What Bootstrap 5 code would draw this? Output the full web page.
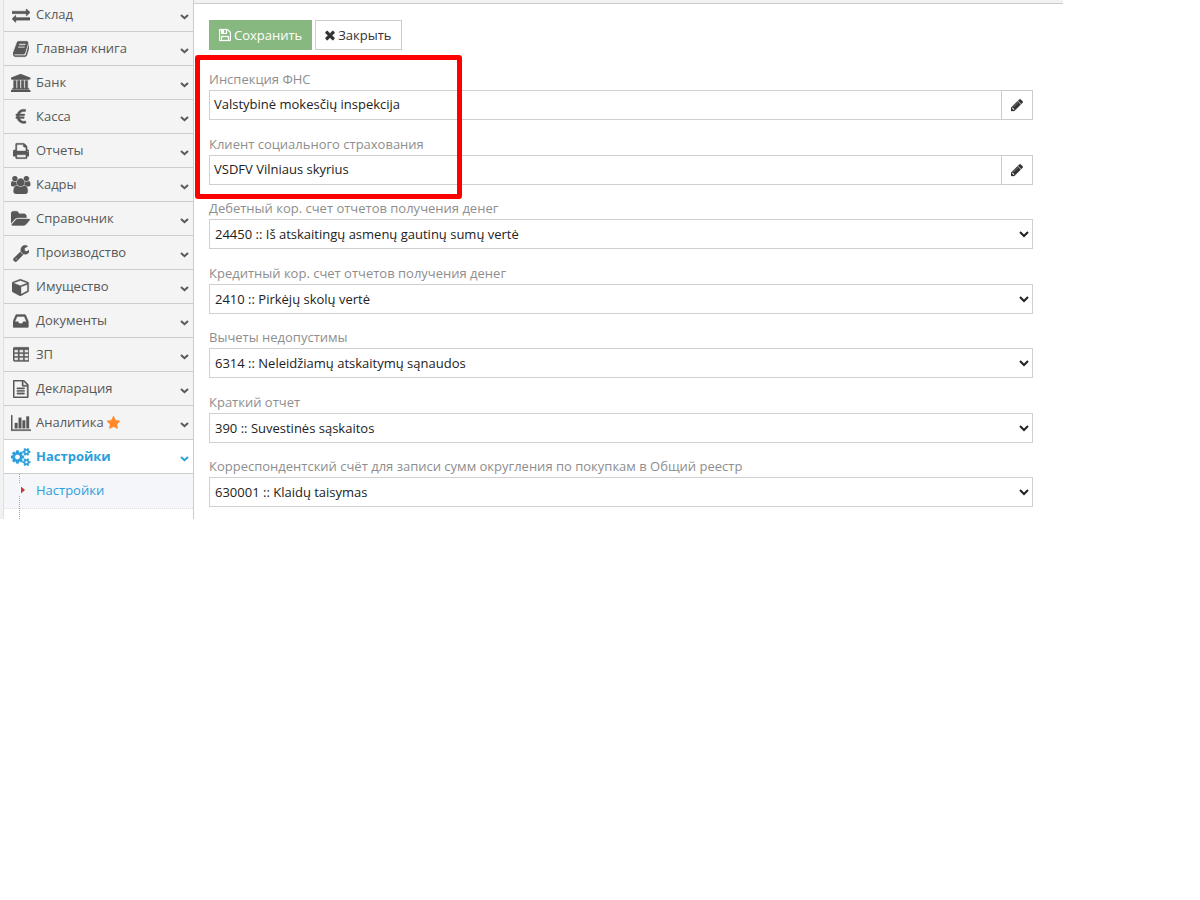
<!DOCTYPE html>
<html lang="ru">
<head>
<meta charset="utf-8">
<meta name="viewport" content="width=device-width, initial-scale=1">
<title>Настройки</title>
<link rel="stylesheet" href="https://cdn.jsdelivr.net/npm/bootstrap@5.3.0/dist/css/bootstrap.min.css">
<style>
  body { font-family: "Open Sans", "Noto Sans", sans-serif; font-size: 13px; line-height: 20px; color: #393939; background: #fff; }
  .shell { max-width: 1063px; }
  .side { width: 194px; background: #f2f2f2; border-right: 1px solid #ccc; padding-left: 3px; overflow: hidden; }
  .side-menu { border-left: 1px solid #e0e0e0; margin-top: -2px; background: #fff; padding-bottom: 10px; }
  .side-link { height: 34px; padding: 0 4px 0 2px; color: #585858; background: #f4f4f4; border-bottom: 1px solid #ccc; }
  .side-link.active { color: #2b9fdc; background: #fff; font-weight: 700; }
  .side-text { padding-bottom: 2px; }
  .side-icon { width: 30px; }
  .ico, .ico-sm { fill: currentColor; stroke: currentColor; stroke-width: 36; display: block; }
  .ico { height: 18px; }
  .ico-sm { height: 14px; }
  .near { margin-right: 3px; }
  .chev { width: 9px; height: 6px; margin-top: 4px; fill: none; stroke: currentColor; stroke-width: 2; }
  .star { color: #ff892a; }
  .tree { position: relative; }
  .tree::before { content: ""; position: absolute; z-index: 1; left: 15px; top: 0; bottom: -10px; border-left: 1px dotted #7fb0d6; }
  .tree-link { height: 35px; padding: 0 0 2px 32px; color: #2b9fdc; background: #f4f6fa; border-bottom: 1px dotted #ddd; }
  .tree-arrow { position: absolute; z-index: 2; left: 13px; top: 10px; width: 10px; height: 12px; background: #f4f6fa; fill: #c0403a; }
  .topbar { height: 4px; background: #f2f2f2; border-bottom: 1px solid #ccc; }
  .content { padding: 16px 30px 0 15px; }
  .tool { height: 30px; border-radius: 0; font-size: 13px; line-height: 20px; padding: 0 9px; color: #333; background: #fff; border: 1px solid #ccc; }
  .tool-save { color: #fff; background: #87b87f; border-color: #87b87f; }
  .tool-edit { width: 32px; padding: 0; }
  .fields { margin-top: 19px; }
  .group { margin-bottom: 14px; }
  .group-tight { margin-bottom: 13px; }
  .group label, .group-tight label { display: block; color: #8e8e8e; height: 21px; }
  .field, .pick { height: 30px; font-size: 13px; color: #222; background: #fff; border: 1px solid #d0d0d0; border-radius: 0; }
  .field { padding: 0 4px 2px; border-right: 0; min-width: 0; }
  .pick { padding: 0 1px; display: block; appearance: auto; }
  .marked { position: relative; }
  .marked::after { content: ""; position: absolute; left: -14px; top: -14px; width: 267px; height: 144px; border: 5px solid #f00; border-radius: 3px; pointer-events: none; }
</style>
</head>
<body>
<svg class="d-none" aria-hidden="true">
  <symbol id="pencil" viewBox="128 0 1536 1792"><path d="M491 1536l91-91-235-235-91 91v107h128v128h107zm523-928q0-22-22-22-10 0-17 7l-542 542q-7 7-7 17 0 22 22 22 10 0 17-7l542-542q7-7 7-17zm-54-192l416 416-832 832h-416v-416zm683 96q0 53-37 90l-166 166-416-416 166-165q36-38 90-38 53 0 91 38l235 234q37 39 37 91z"/></symbol>
  <symbol id="down" viewBox="0 0 9 6"><path d="M1 1l3.5 3.2L8 1"/></symbol>
</svg>
<div class="shell d-flex align-items-start w-100">
  <nav class="side flex-shrink-0">
    <div class="side-menu">
      <a href="#" class="side-link d-flex align-items-center text-decoration-none"><span class="side-icon d-flex justify-content-center"><svg class="ico" viewBox="0 0 1792 1792"><path d="M1792 1184v192q0 13-9.500 22.500t-22.500 9.500h-1376v192q0 13-9.500 22.500t-22.500 9.500q-12 0-24-10l-319-320q-9-9-9-22 0-14 9-23l320-320q9-9 23-9 13 0 22.500 9.500t9.500 22.500v192h1376q13 0 22.500 9.500t9.500 22.500zm0-544q0 14-9 23l-320 320q-9 9-23 9-13 0-22.500-9.500t-9.500-22.500v-192h-1376q-13 0-22.500-9.500t-9.500-22.500v-192q0-13 9.500-22.500t22.500-9.500h1376v-192q0-14 9-23t23-9q12 0 24 10l319 319q9 9 9 23z"/></svg></span><span class="side-text">Склад</span><svg class="chev ms-auto"><use href="#down"/></svg></a>
      <a href="#" class="side-link d-flex align-items-center text-decoration-none"><span class="side-icon d-flex justify-content-center"><svg class="ico" viewBox="64 0 1664 1792"><path d="M1703 478q40 57 18 129l-275 906q-19 64-76.500 107.500t-122.500 43.500h-923q-77 0-148.500-53.500t-99.500-131.500q-24-67-2-127 0-4 3-27t4-37q1-8-3-21.500t-3-19.500q2-11 8-21t16.500-23.500 16.500-23.500q23-38 45-91.500t30-91.500q3-10 .5-30t-.5-28q3-11 17-28t17-23q21-36 42-92t25-90q1-9-2.500-32t.5-28q4-13 22-30.500t22-22.500q19-26 42.500-84.500t27.500-96.500q1-8-3-25.500t-2-26.500q2-8 9-18t18-23 17-21q8-12 16.500-30.500t15-35 16-36 19.500-32 26.500-23.500 36-11.500 47.500 5.500l-1 3q38-9 51-9h761q74 0 114 56t18 130l-274 906q-36 119-71.500 153.500t-128.500 34.500h-869q-27 0-38 15-11 16-1 43 24 70 144 70h923q29 0 56-15.500t35-41.500l300-987q7-22 5-57 38 15 59 43zm-1064 2q-4 13 2 22.500t20 9.500h608q13 0 25.500-9.500t16.500-22.500l21-64q4-13-2-22.500t-20-9.500h-608q-13 0-25.500 9.500t-16.500 22.500zm-83 256q-4 13 2 22.500t20 9.500h608q13 0 25.500-9.500t16.500-22.500l21-64q4-13-2-22.500t-20-9.500h-608q-13 0-25.500 9.500t-16.500 22.500z"/></svg></span><span class="side-text">Главная книга</span><svg class="chev ms-auto"><use href="#down"/></svg></a>
      <a href="#" class="side-link d-flex align-items-center text-decoration-none"><span class="side-icon d-flex justify-content-center"><svg class="ico" viewBox="0 0 1920 1792"><path d="M960 0l960 384v128h-128q0 26-20.500 45t-48.500 19h-1526q-28 0-48.500-19t-20.500-45h-128v-128zm-704 640h256v768h128v-768h256v768h128v-768h256v768h128v-768h256v768h59q28 0 48.500 19t20.500 45v64h-1664v-64q0-26 20.500-45t48.500-19h59v-768zm1595 960q28 0 48.500 19t20.500 45v128h-1920v-128q0-26 20.500-45t48.500-19h1782z"/></svg></span><span class="side-text">Банк</span><svg class="chev ms-auto"><use href="#down"/></svg></a>
      <a href="#" class="side-link d-flex align-items-center text-decoration-none"><span class="side-icon d-flex justify-content-center"><svg class="ico" viewBox="0 0 1792 1792"><path d="M1360 1307l35 159q3 12-3 22.500t-17 14.500l-5 1q-4 2-10.500 3.500t-16 4.500-21.500 5.500-25.500 5-30 5-33.500 4.500-36.500 3-38.500 1q-234 0-409-130.500t-238-351.500h-95q-13 0-22.500-9.500t-9.500-22.500v-113q0-13 9.500-22.500t22.500-9.500h66q-2-57 1-105h-67q-14 0-23-9t-9-23v-114q0-14 9-23t23-9h98q67-210 243.500-338t400.500-128q102 0 194 23 11 3 20 15 6 11 3 24l-43 159q-3 13-14 19.500t-24 2.500l-4-1q-4-1-11.500-2.500l-17.500-3.500-22.500-3.500-26-3-29-2.500-29.500-1q-126 0-226 64t-150 176h468q16 0 25 12 10 12 7 26l-24 114q-5 26-32 26h-488q-3 37 0 105h459q15 0 25 12 9 12 6 27l-24 112q-2 11-11 18.500t-20 7.500h-387q48 117 149.500 185.500t228.500 68.500q18 0 36-1.500t33.500-3.500 29.500-4.500 24.500-5 18.500-4.500l12-3 5-2q13-5 26 2 12 7 15 21z"/></svg></span><span class="side-text">Касса</span><svg class="chev ms-auto"><use href="#down"/></svg></a>
      <a href="#" class="side-link d-flex align-items-center text-decoration-none"><span class="side-icon d-flex justify-content-center"><svg class="ico" viewBox="64 0 1664 1792"><path d="M448 1536h896v-256h-896v256zm0-640h896v-384h-160q-40 0-68-28t-28-68v-160h-640v640zm1152 64q0-26-19-45t-45-19-45 19-19 45 19 45 45 19 45-19 19-45zm128 0v416q0 13-9.500 22.500t-22.500 9.500h-224v160q0 40-28 68t-68 28h-960q-40 0-68-28t-28-68v-160h-224q-13 0-22.500-9.500t-9.500-22.500v-416q0-79 56.500-135.500t135.500-56.500h64v-544q0-40 28-68t68-28h672q40 0 88 20t76 48l152 152q28 28 48 76t20 88v256h64q79 0 135.500 56.500t56.500 135.500z"/></svg></span><span class="side-text">Отчеты</span><svg class="chev ms-auto"><use href="#down"/></svg></a>
      <a href="#" class="side-link d-flex align-items-center text-decoration-none"><span class="side-icon d-flex justify-content-center"><svg class="ico" viewBox="64 0 1920 1792"><path d="M657 896q-162 5-265 128h-134q-82 0-138-40.500t-56-118.500q0-353 124-353 6 0 43.500 21t97.500 42.500 119 21.500q67 0 133-23-5 37-5 66 0 143 81 256zm1071 637q0 120-73 189.500t-194 69.500h-874q-121 0-194-69.500t-73-189.500q0-53 3.500-103.500t14-109 26.500-108.500 43-97.500 62-81 85.500-53.500 111.500-20q10 0 43 21.500t73 48 107 48 135 21.500 135-21.500 107-48 73-48 43-21.500q61 0 111.500 20t85.500 53.500 62 81 43 97.500 26.500 108.500 14 109 3.500 103.500zm-1024-1277q0 106-75 181t-181 75-181-75-75-181 75-181 181-75 181 75 75 181zm704 384q0 159-112.500 271.500t-271.500 112.500-271.500-112.500-112.500-271.500 112.500-271.500 271.500-112.500 271.500 112.500 112.500 271.500zm576 225q0 78-56 118.500t-138 40.500h-134q-103-123-265-128 81-113 81-256 0-29-5-66 66 23 133 23 59 0 119-21.500t97.500-42.500 43.500-21q124 0 124 353zm-128-609q0 106-75 181t-181 75-181-75-75-181 75-181 181-75 181 75 75 181z"/></svg></span><span class="side-text">Кадры</span><svg class="chev ms-auto"><use href="#down"/></svg></a>
      <a href="#" class="side-link d-flex align-items-center text-decoration-none"><span class="side-icon d-flex justify-content-center"><svg class="ico" viewBox="0 0 1920 1792"><path d="M1879 952q0 31-31 66l-336 396q-43 51-120.500 86.500t-143.500 35.500h-1088q-34 0-60.500-13t-26.500-43q0-31 31-66l336-396q43-51 120.500-86.500t143.500-35.500h1088q34 0 60.500 13t26.500 43zm-343-344v160h-832q-94 0-197 47.500t-164 119.500l-337 396-5 6q0-4-.5-12.500t-.5-12.500v-960q0-92 66-158t158-66h320q92 0 158 66t66 158v32h544q92 0 158 66t66 158z"/></svg></span><span class="side-text">Справочник</span><svg class="chev ms-auto"><use href="#down"/></svg></a>
      <a href="#" class="side-link d-flex align-items-center text-decoration-none"><span class="side-icon d-flex justify-content-center"><svg class="ico" viewBox="64 0 1664 1792"><path d="M448 1472q0-26-19-45t-45-19-45 19-19 45 19 45 45 19 45-19 19-45zm644-420l-682 682q-37 37-90 37-52 0-91-37l-106-108q-38-36-38-90 0-53 38-91l681-681q39 98 114.500 173.500t173.500 114.500zm634-435q0 39-23 106-47 134-164.500 217.500t-258.500 83.500q-185 0-316.500-131.500t-131.500-316.500 131.500-316.500 316.500-131.500q58 0 121.500 16.500t107.500 46.500q16 11 16 28t-16 28l-293 169v224l193 107q5-3 79-48.500t135.500-81 70.500-35.500q15 0 23.500 10t8.500 25z"/></svg></span><span class="side-text">Производство</span><svg class="chev ms-auto"><use href="#down"/></svg></a>
      <a href="#" class="side-link d-flex align-items-center text-decoration-none"><span class="side-icon d-flex justify-content-center"><svg class="ico" viewBox="0 0 1792 1792"><path d="M896 1629l640-349v-636l-640 233v752zm-64-865l698-254-698-254-698 254zm832-252v768q0 35-18 65t-49 47l-704 384q-28 16-61 16t-61-16l-704-384q-31-17-49-47t-18-65v-768q0-40 23-73t61-47l704-256q22-8 44-8t44 8l704 256q38 14 61 47t23 73z"/></svg></span><span class="side-text">Имущество</span><svg class="chev ms-auto"><use href="#down"/></svg></a>
      <a href="#" class="side-link d-flex align-items-center text-decoration-none"><span class="side-icon d-flex justify-content-center"><svg class="ico" viewBox="0 0 1536 1792"><path d="M1023 960h316q-1-3-2.500-8t-2.500-8l-212-496h-708l-212 496q-1 2-2.500 8t-2.500 8h316l95 192h320zm513 30v482q0 26-19 45t-45 19h-1408q-26 0-45-19t-19-45v-482q0-62 25-123l238-552q10-25 36.500-42t52.500-17h832q26 0 52.500 17t36.500 42l238 552q25 61 25 123z"/></svg></span><span class="side-text">Документы</span><svg class="chev ms-auto"><use href="#down"/></svg></a>
      <a href="#" class="side-link d-flex align-items-center text-decoration-none"><span class="side-icon d-flex justify-content-center"><svg class="ico" viewBox="0 0 1664 1792"><path fill-rule="evenodd" d="M160 128h1344q160 0 160 160v1088q0 160-160 160h-1344q-160 0-160-160v-1088q0-160 160-160zM128 384h384v256h-384zM640 384h384v256h-384zM1152 384h384v256h-384zM128 768h384v256h-384zM640 768h384v256h-384zM1152 768h384v256h-384zM128 1152h384v256h-384zM640 1152h384v256h-384zM1152 1152h384v256h-384z"/></svg></span><span class="side-text">ЗП</span><svg class="chev ms-auto"><use href="#down"/></svg></a>
      <a href="#" class="side-link d-flex align-items-center text-decoration-none"><span class="side-icon d-flex justify-content-center"><svg class="ico" viewBox="0 0 1536 1792"><path d="M1468 380q28 28 48 76t20 88v1152q0 40-28 68t-68 28h-1344q-40 0-68-28t-28-68v-1600q0-40 28-68t68-28h896q40 0 88 20t76 48zm-444-244v376h376q-10-29-22-41l-313-313q-12-12-41-22zm384 1528v-1024h-416q-40 0-68-28t-28-68v-416h-768v1536h1280zm-1024-864q0-14 9-23t23-9h704q14 0 23 9t9 23v64q0 14-9 23t-23 9h-704q-14 0-23-9t-9-23v-64zm736 224q14 0 23 9t9 23v64q0 14-9 23t-23 9h-704q-14 0-23-9t-9-23v-64q0-14 9-23t23-9h704zm0 256q14 0 23 9t9 23v64q0 14-9 23t-23 9h-704q-14 0-23-9t-9-23v-64q0-14 9-23t23-9h704z"/></svg></span><span class="side-text">Декларация</span><svg class="chev ms-auto"><use href="#down"/></svg></a>
      <a href="#" class="side-link d-flex align-items-center text-decoration-none"><span class="side-icon d-flex justify-content-center"><svg class="ico" viewBox="0 0 2048 1792"><path d="M640 896v512h-256v-512h256zm384-512v1024h-256v-1024h256zm1024 1152v128h-2048v-1536h128v1408h1920zm-640-896v768h-256v-768h256zm384-384v1152h-256v-1152h256z"/></svg></span><span class="side-text near">Аналитика</span><svg class="ico-sm star" viewBox="64 0 1664 1792"><path d="M1728 647q0 22-26 48l-363 354 86 500q1 7 1 20 0 21-10.500 35.500t-30.500 14.500q-19 0-40-12l-449-236-449 236q-22 12-40 12-21 0-31.500-14.500t-10.500-35.500q0-6 2-20l86-500-364-354q-25-27-25-48 0-37 56-46l502-73 225-455q19-41 49-41t49 41l225 455 502 73q56 9 56 46z"/></svg><svg class="chev ms-auto"><use href="#down"/></svg></a>
      <a href="#" class="side-link active d-flex align-items-center text-decoration-none"><span class="side-icon d-flex justify-content-center"><svg class="ico" viewBox="0 0 1920 1792"><path d="M896 896q0-106-75-181t-181-75-181 75-75 181 75 181 181 75 181-75 75-181zm768 512q0-52-38-90t-90-38-90 38-38 90q0 53 37.500 90.500t90.500 37.500 90.500-37.500 37.500-90.500zm0-1024q0-52-38-90t-90-38-90 38-38 90q0 53 37.500 90.500t90.500 37.500 90.500-37.500 37.500-90.500zm-384 421v185q0 10-7 19.500t-16 10.500l-155 24q-11 35-32 76 34 48 90 115 7 11 7 20 0 12-7 19-23 30-82.500 89.500t-78.500 59.500q-11 0-21-7l-115-90q-37 19-77 31-11 108-23 155-7 24-30 24h-186q-11 0-20-7.500t-10-17.500l-23-153q-34-10-75-31l-118 89q-7 7-20 7-11 0-21-8-144-133-144-160 0-9 7-19 10-14 41-53t47-61q-23-44-35-82l-152-24q-10-1-17-9.500t-7-19.500v-185q0-10 7-19.500t16-10.500l155-24q11-35 32-76-34-48-90-115-7-11-7-20 0-12 7-20 22-30 82-89t79-59q11 0 21 7l115 90q34-18 77-32 11-108 23-154 7-24 30-24h186q11 0 20 7.500t10 17.500l23 153q34 10 75 31l118-89q8-7 20-7 11 0 21 8 144 133 144 160 0 8-7 19-12 16-42 54t-45 60q23 48 34 82l152 23q10 2 17 10.500t7 19.500zm640 533v140q0 16-149 31-12 27-30 52 51 113 51 138 0 4-4 7-122 71-124 71-8 0-46-47t-52-68q-20 2-30 2t-30-2q-14 21-52 68t-46 47q-2 0-124-71-4-3-4-7 0-25 51-138-18-25-30-52-149-15-149-31v-140q0-16 149-31 13-29 30-52-51-113-51-138 0-4 4-7 4-2 35-20t59-34 30-16q8 0 46 46.500t52 67.500q20-2 30-2t30 2q51-71 92-112l6-2q4 0 124 70 4 3 4 7 0 25-51 138 17 23 30 52 149 15 149 31zm0-1024v140q0 16-149 31-12 27-30 52 51 113 51 138 0 4-4 7-122 71-124 71-8 0-46-47t-52-68q-20 2-30 2t-30-2q-14 21-52 68t-46 47q-2 0-124-71-4-3-4-7 0-25 51-138-18-25-30-52-149-15-149-31v-140q0-16 149-31 13-29 30-52-51-113-51-138 0-4 4-7 4-2 35-20t59-34 30-16q8 0 46 46.500t52 67.500q20-2 30-2t30 2q51-71 92-112l6-2q4 0 124 70 4 3 4 7 0 25-51 138 17 23 30 52 149 15 149 31z"/></svg></span><span class="side-text">Настройки</span><svg class="chev ms-auto"><use href="#down"/></svg></a>
      <div class="tree">
        <a href="#" class="tree-link d-flex align-items-center text-decoration-none"><svg class="tree-arrow" viewBox="0 0 10 12"><path d="M4 2.500v7L8 6z"/></svg>Настройки</a>
      </div>
    </div>
  </nav>
  <main class="flex-grow-1">
    <div class="topbar"></div>
    <form class="content">
      <div class="d-flex">
        <button type="button" class="btn tool tool-save d-flex align-items-center near"><svg class="ico-sm near" viewBox="128 0 1536 1792"><path d="M512 1536h768v-384h-768v384zm896 0h128v-896q0-14-10-38.500t-20-34.500l-281-281q-10-10-34-20t-39-10v416q0 40-28 68t-68 28h-576q-40 0-68-28t-28-68v-416h-128v1280h128v-416q0-40 28-68t68-28h832q40 0 68 28t28 68v416zm-384-928v-320q0-13-9.500-22.500t-22.500-9.500h-192q-13 0-22.500 9.500t-9.500 22.500v320q0 13 9.500 22.500t22.500 9.500h192q13 0 22.500-9.500t9.500-22.500zm640 32v928q0 40-28 68t-68 28h-1344q-40 0-68-28t-28-68v-1344q0-40 28-68t68-28h928q40 0 88 20t76 48l280 280q28 28 48 76t20 88z"/></svg>Сохранить</button>
        <button type="button" class="btn tool d-flex align-items-center"><svg class="ico-sm near" viewBox="256 0 1280 1792"><path d="M1490 1322q0 40-28 68l-136 136q-28 28-68 28t-68-28l-294-294-294 294q-28 28-68 28t-68-28l-136-136q-28-28-28-68t28-68l294-294-294-294q-28-28-28-68t28-68l136-136q28-28 68-28t68 28l294 294 294-294q28-28 68-28t68 28l136 136q28 28 28 68t-28 68l-294 294 294 294q28 28 28 68z"/></svg>Закрыть</button>
      </div>
      <div class="fields">
        <div class="marked">
          <div class="group">
            <label for="tax">Инспекция ФНС</label>
            <div class="d-flex"><input id="tax" type="text" class="field flex-grow-1" value="Valstybinė mokesčių inspekcija"><button type="button" class="btn tool tool-edit d-flex align-items-center justify-content-center" aria-label="Изменить"><svg class="ico-sm" width="12"><use href="#pencil"/></svg></button></div>
          </div>
          <div class="group-tight">
            <label for="social">Клиент социального страхования</label>
            <div class="d-flex"><input id="social" type="text" class="field flex-grow-1" value="VSDFV Vilniaus skyrius"><button type="button" class="btn tool tool-edit d-flex align-items-center justify-content-center" aria-label="Изменить"><svg class="ico-sm" width="12"><use href="#pencil"/></svg></button></div>
          </div>
        </div>
        <div class="group">
          <label for="debit">Дебетный кор. счет отчетов получения денег</label>
          <select id="debit" class="pick w-100"><option>24450 :: Iš atskaitingų asmenų gautinų sumų vertė</option></select>
        </div>
        <div class="group-tight">
          <label for="credit">Кредитный кор. счет отчетов получения денег</label>
          <select id="credit" class="pick w-100"><option>2410 :: Pirkėjų skolų vertė</option></select>
        </div>
        <div class="group">
          <label for="deduct">Вычеты недопустимы</label>
          <select id="deduct" class="pick w-100"><option>6314 :: Neleidžiamų atskaitymų sąnaudos</option></select>
        </div>
        <div class="group-tight">
          <label for="brief">Краткий отчет</label>
          <select id="brief" class="pick w-100"><option>390 :: Suvestinės sąskaitos</option></select>
        </div>
        <div class="group">
          <label for="round">Корреспондентский счёт для записи сумм округления по покупкам в Общий реестр</label>
          <select id="round" class="pick w-100"><option>630001 :: Klaidų taisymas</option></select>
        </div>
      </div>
    </form>
  </main>
</div>
<script src="https://cdn.jsdelivr.net/npm/bootstrap@5.3.0/dist/js/bootstrap.bundle.min.js"></script>
</body>
</html>
